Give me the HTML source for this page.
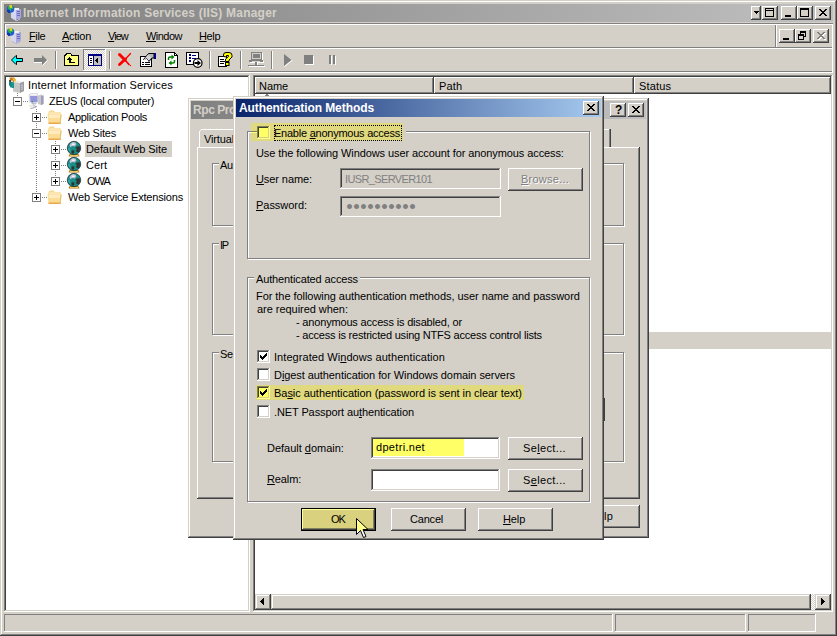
<!DOCTYPE html>
<html lang="en"><head><meta charset="utf-8"><title>Internet Information Services (IIS) Manager</title>
<style>
*{box-sizing:border-box;margin:0;padding:0}
html,body{width:837px;height:636px;overflow:hidden;background:#d4d0c8}
body{position:relative;font-family:"Liberation Sans",sans-serif;font-size:11px;line-height:13px;color:#000;-webkit-font-smoothing:none}
.a{position:absolute}
.t{position:absolute;white-space:nowrap;height:13px;line-height:13px}
.b{font-weight:bold}
u{text-decoration:underline;text-underline-offset:1px;text-decoration-thickness:1px}
.win{background:#d4d0c8;box-shadow:inset -1px -1px 0 #404040,inset 1px 1px 0 #d4d0c8,inset -2px -2px 0 #808080,inset 2px 2px 0 #fff}
.btn{background:#d4d0c8;box-shadow:inset -1px -1px 0 #404040,inset 1px 1px 0 #fff,inset -2px -2px 0 #808080,inset 2px 2px 0 #d4d0c8}
.sunk{box-shadow:inset -1px -1px 0 #fff,inset 1px 1px 0 #808080,inset -2px -2px 0 #d4d0c8,inset 2px 2px 0 #404040}
.sp{box-shadow:inset -1px -1px 0 #fff,inset 1px 1px 0 #808080}
.grp{border:1px solid #808080;box-shadow:1px 1px 0 #fff,inset 1px 1px 0 #fff}
.hdr{background:#d4d0c8;box-shadow:inset -1px -1px 0 #404040,inset 1px 1px 0 #fff,inset -2px -2px 0 #808080}
.capI{background:linear-gradient(90deg,#808080,#c0c0c0)}
.capA{background:linear-gradient(90deg,#0a246a,#a6caf0)}
.sep{position:absolute;width:2px;height:18px;top:51px;border-left:1px solid #808080;border-right:1px solid #fff}
.cb{position:absolute;width:13px;height:13px;background:#fff;box-shadow:inset -1px -1px 0 #fff,inset 1px 1px 0 #808080,inset -2px -2px 0 #d4d0c8,inset 2px 2px 0 #404040}
.cby{background:#ffff66;box-shadow:inset -1px -1px 0 #ffff8c,inset 1px 1px 0 #80805a,inset -2px -2px 0 #d9d17e,inset 2px 2px 0 #40402c}
.dv{position:absolute;width:1px;background-image:linear-gradient(#808080 50%,transparent 50%);background-size:1px 2px}
.dh{position:absolute;height:1px;background-image:linear-gradient(90deg,#808080 50%,transparent 50%);background-size:2px 1px}
.pm{position:absolute;width:9px;height:9px;background:#fff;border:1px solid #808080}
.pm i{position:absolute;left:1px;top:3px;width:5px;height:1px;background:#000}
.pm b{position:absolute;left:3px;top:1px;width:1px;height:5px;background:#000}
svg{position:absolute;overflow:visible}
</style></head>
<body>
<div class="a win" style="left:0;top:0;width:837px;height:636px"></div>
<div class="a capI" style="left:4px;top:4px;width:829px;height:18px"></div>
<svg class="a" style="left:6px;top:5px" width="16" height="16" viewBox="0 0 16 16" shape-rendering="crispEdges" ><path d="M5 4l5-1l5 1v9l-5 2l-5-2z" fill="#d6d6ee"/><path d="M10 5l5-1v9l-5 2z" fill="#a8a8dc"/><path d="M5 4l5-1l5 1l-5 1z" fill="#f0f0fa"/><rect x="11" y="6" width="3" height="1" fill="#6c6cc8"/><rect x="11" y="8" width="3" height="1" fill="#6c6cc8"/><rect x="11" y="10" width="3" height="1" fill="#6c6cc8"/><path d="M6 13l4 2l4-1v1l-4 1l-4-2z" fill="#b8b8d0"/><circle cx="4.500" cy="4" r="3.800" fill="#1c60d0" shape-rendering="auto"/><path d="M2 1h5v3h-2v2h-2v-2h-1z" fill="#28b050" shape-rendering="auto"/><path d="M3 0h3v3h-2z" fill="#e0d020" shape-rendering="auto"/><path d="M1 5h3v3h-2z" fill="#1838b0"/></svg>
<span class="t" style="left:23px;top:7px;letter-spacing:0.214px;font-weight:bold;font-size:12px;color:#d4d0c8">Internet Information Services (IIS) Manager</span>
<div class="a btn" style="left:751px;top:6px;width:10px;height:14px"><svg style="left:3px;top:5px" width="5" height="3" shape-rendering="crispEdges"><path d="M0 0h5v1h-1v1h-1v1h-1v-1h-1v-1h-1z" fill="#000"/></svg></div>
<div class="a btn" style="left:762px;top:6px;width:16px;height:14px"><svg style="left:3px;top:2px" width="9" height="9" shape-rendering="crispEdges"><path d="M0 0h9v9h-9zM1 3v5h7v-5zM1 1v1h7v-1z" fill="#000" fill-rule="evenodd"/></svg></div>
<div class="a btn" style="left:781px;top:6px;width:16px;height:14px"><svg style="left:4px;top:9px" width="6" height="2"><rect width="6" height="2" fill="#000"/></svg></div>
<div class="a btn" style="left:797px;top:6px;width:16px;height:14px"><svg style="left:3px;top:2px" width="9" height="9" shape-rendering="crispEdges"><path d="M0 0h9v9h-9zM1 2v6h7v-6z" fill="#000" fill-rule="evenodd"/></svg></div>
<div class="a btn" style="left:815px;top:6px;width:16px;height:14px"><svg style="left:4px;top:3px" width="8" height="7" viewBox="0 0 8 7" shape-rendering="crispEdges"><path d="M0 0h2v1h1v1h2v-1h1v-1h2v1h-1v1h-1v1h-1v1h1v1h1v1h1v1h-2v-1h-1v-1h-2v1h-1v1h-2v-1h1v-1h1v-1h1v-1h-1v-1h-1v-1h-1z" fill="#000"/></svg></div>
<div class="a" style="left:4px;top:23px;width:829px;height:1px;background:#808080"></div>
<div class="a" style="left:4px;top:24px;width:829px;height:1px;background:#fff"></div>
<div class="a" style="left:4px;top:47px;width:829px;height:1px;background:#808080"></div>
<div class="a" style="left:4px;top:48px;width:829px;height:1px;background:#fff"></div>
<div class="a" style="left:4px;top:71px;width:829px;height:1px;background:#808080"></div>
<div class="a" style="left:4px;top:72px;width:829px;height:1px;background:#fff"></div>
<div class="a" style="left:4px;top:24px;width:1px;height:47px;background:#808080"></div>
<div class="a" style="left:5px;top:25px;width:1px;height:22px;background:#fff"></div>
<div class="a" style="left:5px;top:49px;width:1px;height:22px;background:#fff"></div>
<div class="a" style="left:775px;top:25px;width:1px;height:22px;background:#808080"></div>
<div class="a" style="left:776px;top:25px;width:1px;height:22px;background:#fff"></div>
<div class="a" style="left:832px;top:24px;width:1px;height:49px;background:#fff"></div>
<svg class="a" style="left:6px;top:28px" width="16" height="16" viewBox="0 0 16 16" shape-rendering="crispEdges" ><path d="M5 4l5-1l5 1v9l-5 2l-5-2z" fill="#d6d6ee"/><path d="M10 5l5-1v9l-5 2z" fill="#a8a8dc"/><path d="M5 4l5-1l5 1l-5 1z" fill="#f0f0fa"/><rect x="11" y="6" width="3" height="1" fill="#6c6cc8"/><rect x="11" y="8" width="3" height="1" fill="#6c6cc8"/><rect x="11" y="10" width="3" height="1" fill="#6c6cc8"/><path d="M6 13l4 2l4-1v1l-4 1l-4-2z" fill="#b8b8d0"/><circle cx="4.500" cy="4" r="3.800" fill="#1c60d0" shape-rendering="auto"/><path d="M2 1h5v3h-2v2h-2v-2h-1z" fill="#28b050" shape-rendering="auto"/><path d="M3 0h3v3h-2z" fill="#e0d020" shape-rendering="auto"/><path d="M1 5h3v3h-2z" fill="#1838b0"/></svg>
<span class="t" style="left:29px;top:30px;letter-spacing:-0.388px;"><u>F</u>ile</span>
<span class="t" style="left:62px;top:30px;letter-spacing:-0.266px;"><u>A</u>ction</span>
<span class="t" style="left:108px;top:30px;letter-spacing:-0.964px;"><u>V</u>iew</span>
<span class="t" style="left:146px;top:30px;letter-spacing:-0.537px;"><u>W</u>indow</span>
<span class="t" style="left:199px;top:30px;letter-spacing:-0.360px;"><u>H</u>elp</span>
<div class="a btn" style="left:779px;top:29px;width:16px;height:14px"><svg style="left:4px;top:9px" width="6" height="2"><rect width="6" height="2" fill="#000"/></svg></div>
<div class="a btn" style="left:795px;top:29px;width:16px;height:14px"><svg style="left:3px;top:2px" width="10" height="9" shape-rendering="crispEdges"><path d="M2 0h6v6h-2v-1h1v-3h-4v1h-1zM0 3h6v6h-6zM1 5v3h4v-3z" fill="#000" fill-rule="evenodd"/></svg></div>
<div class="a btn" style="left:813px;top:29px;width:16px;height:14px"><svg style="left:5px;top:4px" width="8" height="7" viewBox="0 0 8 7" shape-rendering="crispEdges"><path d="M0 0h2v1h1v1h2v-1h1v-1h2v1h-1v1h-1v1h-1v1h1v1h1v1h1v1h-2v-1h-1v-1h-2v1h-1v1h-2v-1h1v-1h1v-1h1v-1h-1v-1h-1v-1h-1z" fill="#fff"/></svg><svg style="left:4px;top:3px" width="8" height="7" viewBox="0 0 8 7" shape-rendering="crispEdges"><path d="M0 0h2v1h1v1h2v-1h1v-1h2v1h-1v1h-1v1h-1v1h1v1h1v1h1v1h-2v-1h-1v-1h-2v1h-1v1h-2v-1h1v-1h1v-1h1v-1h-1v-1h-1v-1h-1z" fill="#808080"/></svg></div>
<svg class="a" style="left:9px;top:52px" width="16" height="16" viewBox="0 0 16 16" shape-rendering="crispEdges" ><path d="M2.500 8L7 3.500H7.500V6.500H13.500V9.500H7.500V12.500H7Z" fill="#00ffff" stroke="#000" stroke-width="1" stroke-linejoin="miter" shape-rendering="auto"/></svg>
<svg class="a" style="left:32px;top:52px" width="16" height="16" viewBox="0 0 16 16" shape-rendering="crispEdges" ><path d="M15 8L10 3V6H2V10H10V13Z" fill="#808080" shape-rendering="auto"/><path d="M10.500 13.500L15.500 8.500M2 10.500H10" stroke="#fff" stroke-width="1" fill="none" shape-rendering="auto"/></svg>
<div class="sep" style="left:55px"></div>
<svg class="a" style="left:63px;top:52px" width="16" height="16" viewBox="0 0 16 16" shape-rendering="crispEdges" ><path d="M1.500 3.500H2.500V2.500H3.500V1.500H7.500V2.500H8.500V3.500H15.500V13.500H1.500Z" fill="#ffff80" stroke="#000" stroke-width="1"/><rect x="4" y="2" width="4" height="2" fill="#ffff80"/><rect x="6" y="5" width="1" height="1"/><rect x="5" y="6" width="3" height="1"/><rect x="4" y="7" width="5" height="1"/><rect x="6" y="8" width="2" height="2"/><rect x="6" y="10" width="6" height="1"/></svg>
<div class="a sp" style="left:83px;top:49px;width:23px;height:22px;background-color:#fff;background-image:conic-gradient(#d4d0c8 25%,#fff 0 50%,#d4d0c8 0 75%,#fff 0);background-size:2px 2px"></div>
<svg class="a" style="left:87px;top:52px" width="16" height="16" viewBox="0 0 16 16" shape-rendering="crispEdges" ><rect x="1" y="2" width="14" height="12" fill="#000080"/><rect x="2" y="4" width="4" height="9" fill="#fff"/><rect x="7" y="4" width="7" height="9" fill="#c0c0c0"/><rect x="3" y="6" width="2" height="1"/><rect x="3" y="8" width="2" height="1"/><rect x="3" y="10" width="2" height="1"/><rect x="8" y="8" width="1" height="1"/><rect x="9" y="7" width="1" height="3"/><rect x="10" y="6" width="1" height="5"/></svg>
<div class="sep" style="left:109px"></div>
<svg class="a" style="left:117px;top:52px" width="16" height="16" viewBox="0 0 16 16" shape-rendering="crispEdges" ><g shape-rendering="auto" fill="none" stroke="#ff0000" stroke-linecap="round"><path d="M2.500 2.500L8 8" stroke-width="3"/><path d="M8 8L12 12.500" stroke-width="1.800"/><path d="M13.500 1.500L8.500 7" stroke-width="1.300"/><path d="M8.500 7L2.500 12.500" stroke-width="2.800"/></g><rect x="13" y="13" width="1" height="1" fill="#ff0000"/></svg>
<svg class="a" style="left:140px;top:52px" width="16" height="16" viewBox="0 0 16 16" shape-rendering="crispEdges" ><rect x="0.500" y="4.500" width="11" height="10" fill="#fff" stroke="#000"/><rect x="2" y="10" width="2" height="1"/><rect x="5" y="10" width="5" height="1"/><rect x="2" y="12" width="2" height="1"/><rect x="5" y="12" width="5" height="1"/><g shape-rendering="auto"><path d="M3.500 7.500L8.500 1.500H14V6H12L9 9.500L6.500 6.500Z" fill="#b8b8b8" stroke="#000" stroke-width="1"/><path d="M4 8l4.500-5M5.500 8.500l4-4.500M7 9l3.500-4" stroke="#fff" stroke-width=".8"/></g><rect x="14" y="1" width="2" height="6" fill="#000080"/></svg>
<svg class="a" style="left:164px;top:52px" width="16" height="16" viewBox="0 0 16 16" shape-rendering="crispEdges" ><path d="M1.500 0.500H10.500L13.500 3.500V15.500H1.500Z" fill="#fff" stroke="#000"/><path d="M10.500 0.500V3.500H13.500" fill="none" stroke="#000"/><g shape-rendering="auto"><path d="M4.500 8V6.500A1.500 1.500 0 0 1 6 5H8.500M10.500 8V9.500A1.500 1.500 0 0 1 9 11H6.500" fill="none" stroke="#008000" stroke-width="1.500"/><path d="M7.500 2.500L10.500 5L7.500 7.500Z" fill="#008000"/><path d="M7.500 8.500L4.500 11L7.500 13.500Z" fill="#008000"/></g></svg>
<svg class="a" style="left:186px;top:52px" width="16" height="16" viewBox="0 0 16 16" shape-rendering="crispEdges" ><rect x="0.500" y="0.500" width="12" height="12" fill="#fff" stroke="#000"/><rect x="3" y="2" width="2" height="2" fill="#000080"/><rect x="6" y="3" width="4" height="1" fill="#000080"/><rect x="3" y="5" width="2" height="2" fill="#000080"/><rect x="6" y="6" width="4" height="1" fill="#000080"/><rect x="3" y="8" width="2" height="2" fill="#000080"/><g shape-rendering="auto"><circle cx="11.700" cy="11" r="4.300" fill="#fff" stroke="#000" stroke-width="1.200"/><path d="M8.500 10H11.500V8L15 11L11.500 14V12H8.500Z" fill="#000"/></g></svg>
<div class="sep" style="left:209px"></div>
<svg class="a" style="left:217px;top:52px" width="16" height="16" viewBox="0 0 16 16" shape-rendering="crispEdges" ><rect x="1.500" y="4.500" width="8" height="10" fill="#fff" stroke="#000"/><rect x="3" y="7" width="4" height="1"/><rect x="3" y="9" width="5" height="1"/><rect x="3" y="11" width="4" height="1"/><g shape-rendering="auto"><path d="M6.500 4.500V3A2.500 2.500 0 0 1 9 .5H12A3 3 0 0 1 15 3.500V5L12 8V9.500H8.500V7L11.500 4.500V3.500H9.500V5Z" fill="#ffff00" stroke="#000" stroke-width="1"/><rect x="8.500" y="10.500" width="3.500" height="3" fill="#ffff00" stroke="#000"/></g></svg>
<div class="sep" style="left:240px"></div>
<svg class="a" style="left:248px;top:52px" width="16" height="16" viewBox="0 0 16 16" shape-rendering="crispEdges" ><rect x="4" y="1" width="11" height="8" fill="#fff"/><rect x="3" y="0" width="11" height="8" fill="#808080"/><rect x="4" y="1" width="9" height="6" fill="#d4d0c8"/><rect x="5" y="2" width="7" height="4" fill="#808080"/><rect x="2" y="9" width="14" height="2" fill="#fff"/><rect x="1" y="8" width="14" height="2" fill="#808080"/><rect x="4" y="9" width="8" height="1" fill="#d4d0c8"/><rect x="7" y="10" width="2" height="3" fill="#808080"/><rect x="9" y="11" width="1" height="2" fill="#fff"/><rect x="0" y="13" width="16" height="1" fill="#808080"/><rect x="1" y="14" width="16" height="1" fill="#fff"/></svg>
<div class="sep" style="left:271px"></div>
<svg class="a" style="left:279px;top:52px" width="16" height="16" viewBox="0 0 16 16" shape-rendering="crispEdges" ><path d="M5 2L12.500 8L5 14Z" fill="#808080" shape-rendering="auto"/><path d="M5.500 14.500L13.300 8.300" stroke="#fff" stroke-width="1" shape-rendering="auto"/></svg>
<svg class="a" style="left:302px;top:52px" width="16" height="16" viewBox="0 0 16 16" shape-rendering="crispEdges" ><rect x="3" y="4" width="9" height="9" fill="#fff"/><rect x="2" y="3" width="9" height="9" fill="#808080"/></svg>
<svg class="a" style="left:325px;top:52px" width="16" height="16" viewBox="0 0 16 16" shape-rendering="crispEdges" ><rect x="4" y="3" width="2" height="9" fill="#808080"/><rect x="6" y="4" width="1" height="9" fill="#fff"/><rect x="8" y="3" width="2" height="9" fill="#808080"/><rect x="10" y="4" width="1" height="9" fill="#fff"/></svg>
<div class="a sunk" style="left:4px;top:75px;width:246px;height:537px;background:#fff"></div>
<div class="dv" style="left:17px;top:93px;height:4px"></div>
<div class="dh" style="left:23px;top:101px;width:6px"></div>
<div class="dv" style="left:36px;top:109px;height:88px"></div>
<div class="dh" style="left:42px;top:117px;width:6px"></div>
<div class="dh" style="left:42px;top:133px;width:6px"></div>
<div class="dh" style="left:42px;top:197px;width:6px"></div>
<div class="dv" style="left:55px;top:141px;height:40px"></div>
<div class="dh" style="left:61px;top:149px;width:6px"></div>
<div class="dh" style="left:61px;top:165px;width:6px"></div>
<div class="dh" style="left:61px;top:181px;width:6px"></div>
<div class="pm" style="left:13px;top:97px"><i></i></div>
<div class="pm" style="left:32px;top:113px"><i></i><b></b></div>
<div class="pm" style="left:32px;top:129px"><i></i></div>
<div class="pm" style="left:51px;top:145px"><i></i><b></b></div>
<div class="pm" style="left:51px;top:161px"><i></i><b></b></div>
<div class="pm" style="left:51px;top:177px"><i></i><b></b></div>
<div class="pm" style="left:32px;top:193px"><i></i><b></b></div>
<svg class="a" style="left:8px;top:77px" width="16" height="16" viewBox="0 0 16 16" shape-rendering="crispEdges" ><g shape-rendering="auto"><path d="M5 5L9 3.500L16 4.500L12 6Z" fill="#f0f0f0"/><path d="M5 5L12 6V16L5 14.500Z" fill="#c6c6c6"/><path d="M12 6L16 4.500V14L12 16Z" fill="#9c9c9c"/><path d="M13 8.500l2-.7M13 10.500l2-.7M13 12.500l2-.7" stroke="#c8c8f0" stroke-width="1"/><path d="M1 3H5.500V10.500H2.500L1 8Z" fill="#108880"/><path d="M3 6h3v5h-2z" fill="#18988c"/><path d="M1.500 .5H6L8 3L5 5.500L2 4.500Z" fill="#c87c24"/><path d="M4 1L7 2L8.500 4.500L6 4Z" fill="#f8c820"/><rect x="2.500" y="3.500" width="2.500" height="1.500" fill="#d8d8f8"/><rect x="1.500" y="3" width="1.500" height="2" fill="#604020"/></g></svg>
<svg class="a" style="left:28px;top:93px" width="16" height="16" viewBox="0 0 16 16" shape-rendering="crispEdges" ><g shape-rendering="auto"><path d="M.5 1.500L3 0H10V9.500H1Z" fill="#dcdce4"/><path d="M2 3H9.500V9H2.500Z" fill="#9494d8"/><path d="M2.500 1h6.500v1.500h-6.500z" fill="#f4f4f0"/><path d="M10 2.500L13 1.500L15.500 2.500V11L13 12L10 11Z" fill="#c8c8d0"/><path d="M13 3L15.500 2.500V11L13 12Z" fill="#a0a0ac"/><path d="M13.700 4.500l1.300-.3M13.700 6.500l1.300-.3M13.700 8.500l1.300-.3" stroke="#9c9ce0" stroke-width="1"/><rect x="3.500" y="8" width="1.500" height="1.500" fill="#109090"/><path d="M3.500 9.500H8.500V11H3.500Z" fill="#b4b4c8"/><path d="M.5 12L7.500 10.500L9 13L2.500 15.500Z" fill="#ecece0"/><path d="M2.500 15.500L9 13V14L2.500 16.300Z" fill="#9c9cb8"/><path d="M5 11.500l3 2.500" stroke="#a8a8e0" stroke-width="1"/></g></svg>
<svg class="a" style="left:47px;top:109px" width="16" height="16" viewBox="0 0 16 16" shape-rendering="crispEdges" ><g shape-rendering="auto"><path d="M1.500 3L3 1.500H6.500L8 3H13.500V7H1.500Z" fill="#f6d690"/><path d="M2.500 3.500H13V6H2.500Z" fill="#fff4d0"/><path d="M0.500 5.500L1.500 4.500H13.500L14.500 5.500L13.500 14.500H1.500Z" fill="#fcdc94"/><path d="M1.500 5.500H13.500L13.200 9H1.800Z" fill="#feecc0"/><path d="M1.300 13.500H13.700L13.500 15H1.500Z" fill="#e8a848"/><path d="M13.500 6L14.500 5.500L13.600 14.500L13 14Z" fill="#eab45c"/></g></svg>
<svg class="a" style="left:47px;top:125px" width="16" height="16" viewBox="0 0 16 16" shape-rendering="crispEdges" ><g shape-rendering="auto"><path d="M1.500 3L3 1.500H6.500L8 3H13.500V7H1.500Z" fill="#f6d690"/><path d="M2.500 3.500H13V6H2.500Z" fill="#fff4d0"/><path d="M0.500 5.500L1.500 4.500H13.500L14.500 5.500L13.500 14.500H1.500Z" fill="#fcdc94"/><path d="M1.500 5.500H13.500L13.200 9H1.800Z" fill="#feecc0"/><path d="M1.300 13.500H13.700L13.500 15H1.500Z" fill="#e8a848"/><path d="M13.500 6L14.500 5.500L13.600 14.500L13 14Z" fill="#eab45c"/></g></svg>
<svg class="a" style="left:47px;top:189px" width="16" height="16" viewBox="0 0 16 16" shape-rendering="crispEdges" ><g shape-rendering="auto"><path d="M1.500 3L3 1.500H6.500L8 3H13.500V7H1.500Z" fill="#f6d690"/><path d="M2.500 3.500H13V6H2.500Z" fill="#fff4d0"/><path d="M0.500 5.500L1.500 4.500H13.500L14.500 5.500L13.500 14.500H1.500Z" fill="#fcdc94"/><path d="M1.500 5.500H13.500L13.200 9H1.800Z" fill="#feecc0"/><path d="M1.300 13.500H13.700L13.500 15H1.500Z" fill="#e8a848"/><path d="M13.500 6L14.500 5.500L13.600 14.500L13 14Z" fill="#eab45c"/></g></svg>
<svg class="a" style="left:66px;top:141px" width="16" height="16" viewBox="0 0 16 16" shape-rendering="crispEdges" ><g shape-rendering="auto"><path d="M3.500 13L2.500 15.500H13.500L12.500 13Z" fill="#b87c28"/><path d="M4 14.500H12" stroke="#f4cc58" stroke-width="1"/><circle cx="8" cy="7" r="6.700" fill="#188c88"/><circle cx="8" cy="7" r="6.700" fill="none" stroke="#243434" stroke-width=".8"/><path d="M4.500 2.500L7 1L9.500 1.500L10.500 3.500L8.500 5.500L6 5L4.500 6.500L3.500 4.500Z" fill="#c4c4d4"/><path d="M6 2.500h2.500v1.500h-2.500z" fill="#eeeef6"/><path d="M9.500 6L13.500 5L14.300 8L12.500 11.500L10 10.500L10.500 8Z" fill="#2c3434"/><path d="M5.500 9.500L8 9L8.500 11.500L7 13L5.500 12Z" fill="#2c3434"/><path d="M2 6.500L4 7.500L4.500 10.500L3 10Z" fill="#30b0a8"/></g></svg>
<svg class="a" style="left:66px;top:157px" width="16" height="16" viewBox="0 0 16 16" shape-rendering="crispEdges" ><g shape-rendering="auto"><path d="M3.500 13L2.500 15.500H13.500L12.500 13Z" fill="#b87c28"/><path d="M4 14.500H12" stroke="#f4cc58" stroke-width="1"/><circle cx="8" cy="7" r="6.700" fill="#188c88"/><circle cx="8" cy="7" r="6.700" fill="none" stroke="#243434" stroke-width=".8"/><path d="M4.500 2.500L7 1L9.500 1.500L10.500 3.500L8.500 5.500L6 5L4.500 6.500L3.500 4.500Z" fill="#c4c4d4"/><path d="M6 2.500h2.500v1.500h-2.500z" fill="#eeeef6"/><path d="M9.500 6L13.500 5L14.300 8L12.500 11.500L10 10.500L10.500 8Z" fill="#2c3434"/><path d="M5.500 9.500L8 9L8.500 11.500L7 13L5.500 12Z" fill="#2c3434"/><path d="M2 6.500L4 7.500L4.500 10.500L3 10Z" fill="#30b0a8"/></g></svg>
<svg class="a" style="left:66px;top:173px" width="16" height="16" viewBox="0 0 16 16" shape-rendering="crispEdges" ><g shape-rendering="auto"><path d="M3.500 13L2.500 15.500H13.500L12.500 13Z" fill="#b87c28"/><path d="M4 14.500H12" stroke="#f4cc58" stroke-width="1"/><circle cx="8" cy="7" r="6.700" fill="#188c88"/><circle cx="8" cy="7" r="6.700" fill="none" stroke="#243434" stroke-width=".8"/><path d="M4.500 2.500L7 1L9.500 1.500L10.500 3.500L8.500 5.500L6 5L4.500 6.500L3.500 4.500Z" fill="#c4c4d4"/><path d="M6 2.500h2.500v1.500h-2.500z" fill="#eeeef6"/><path d="M9.500 6L13.500 5L14.300 8L12.500 11.500L10 10.500L10.500 8Z" fill="#2c3434"/><path d="M5.500 9.500L8 9L8.500 11.500L7 13L5.500 12Z" fill="#2c3434"/><path d="M2 6.500L4 7.500L4.500 10.500L3 10Z" fill="#30b0a8"/></g></svg>
<div class="a" style="left:85px;top:141px;width:87px;height:16px;background:#d4d0c8"></div>
<span class="t" style="left:28px;top:79px;letter-spacing:0.146px;">Internet Information Services</span>
<span class="t" style="left:49px;top:95px;letter-spacing:-0.298px;">ZEUS (local computer)</span>
<span class="t" style="left:68px;top:111px;letter-spacing:-0.317px;">Application Pools</span>
<span class="t" style="left:68px;top:127px;letter-spacing:-0.215px;">Web Sites</span>
<span class="t" style="left:86px;top:143px;letter-spacing:-0.086px;">Default Web Site</span>
<span class="t" style="left:86px;top:159px;letter-spacing:0.105px;">Cert</span>
<span class="t" style="left:87px;top:175px;letter-spacing:-1.075px;">OWA</span>
<span class="t" style="left:68px;top:191px;letter-spacing:-0.183px;">Web Service Extensions</span>
<div class="a sunk" style="left:253px;top:75px;width:580px;height:537px;background:#fff"></div>
<div class="a hdr" style="left:255px;top:77px;width:179px;height:17px"></div>
<div class="a hdr" style="left:434px;top:77px;width:200px;height:17px"></div>
<div class="a hdr" style="left:634px;top:77px;width:197px;height:17px"></div>
<span class="t" style="left:259px;top:80px;letter-spacing:-0.036px;">Name</span>
<span class="t" style="left:439px;top:80px;letter-spacing:0.140px;">Path</span>
<span class="t" style="left:639px;top:80px;letter-spacing:0.149px;">Status</span>
<div class="a" style="left:266px;top:94px;width:2px;height:1px;background:#808080"></div><div class="a" style="left:265px;top:95px;width:4px;height:1px;background:#808080"></div>
<div class="a" style="left:255px;top:332px;width:576px;height:17px;background:#d4d0c8"></div>
<div class="a" style="left:255px;top:594px;width:576px;height:16px;background-color:#fff;background-image:conic-gradient(#d4d0c8 25%,#fff 0 50%,#d4d0c8 0 75%,#fff 0);background-size:2px 2px"></div>
<div class="a win" style="left:255px;top:594px;width:16px;height:16px"><svg style="left:5px;top:4px" width="4" height="7" shape-rendering="crispEdges"><path d="M3 0h1v7h-1v-1h-1v-1h-1v-1h-1v-1h1v-1h1v-1h1z" fill="#000"/></svg></div>
<div class="a win" style="left:271px;top:594px;width:540px;height:16px"></div>
<div class="a win" style="left:815px;top:594px;width:16px;height:16px"><svg style="left:6px;top:4px" width="4" height="7" shape-rendering="crispEdges"><path d="M0 0h1v1h1v1h1v1h1v1h-1v1h-1v1h-1v1h-1z" fill="#000"/></svg></div>
<div class="a sp" style="left:4px;top:614px;width:609px;height:18px"></div>
<div class="a sp" style="left:615px;top:614px;width:131px;height:18px"></div>
<div class="a sp" style="left:748px;top:614px;width:68px;height:18px"></div>
<div class="a win" style="left:188px;top:98px;width:461px;height:440px"></div>
<div class="a capI" style="left:191px;top:101px;width:455px;height:18px"></div>
<span class="t" style="left:193px;top:104px;letter-spacing:-0.431px;font-weight:bold;font-size:12px;color:#d4d0c8">Rpc Pro</span>
<div class="a btn" style="left:610px;top:103px;width:16px;height:14px"></div>
<span class="t" style="left:615px;top:104px;letter-spacing:-1.344px;font-weight:bold;font-size:12px">?</span>
<div class="a btn" style="left:628px;top:103px;width:16px;height:14px"><svg style="left:4px;top:3px" width="8" height="7" viewBox="0 0 8 7" shape-rendering="crispEdges"><path d="M0 0h2v1h1v1h2v-1h1v-1h2v1h-1v1h-1v1h-1v1h1v1h1v1h1v1h-2v-1h-1v-1h-2v1h-1v1h-2v-1h1v-1h1v-1h1v-1h-1v-1h-1v-1h-1z" fill="#000"/></svg></div>
<div class="a btn" style="left:197px;top:147px;width:443px;height:352px"></div>
<div class="a" style="left:199px;top:131px;width:1px;height:16px;background:#fff"></div>
<div class="a" style="left:200px;top:130px;width:1px;height:1px;background:#fff"></div>
<div class="a" style="left:201px;top:129px;width:40px;height:1px;background:#fff"></div>
<span class="t" style="left:204px;top:133px;letter-spacing:-0.141px;">Virtual</span>
<div class="a" style="left:604px;top:129px;width:7px;height:18px;background:#d4d0c8;box-shadow:inset -1px 0 0 #404040,inset -2px 0 0 #808080,inset 0 1px 0 #fff"></div>
<div class="a grp" style="left:212px;top:163px;width:412px;height:63px"></div>
<div class="a grp" style="left:212px;top:243px;width:412px;height:92px"></div>
<div class="a grp" style="left:212px;top:352px;width:412px;height:110px"></div>
<div class="a" style="left:219px;top:158px;width:20px;height:13px;background:#d4d0c8"></div>
<div class="a" style="left:219px;top:237px;width:16px;height:13px;background:#d4d0c8"></div>
<div class="a" style="left:219px;top:346px;width:20px;height:13px;background:#d4d0c8"></div>
<span class="t" style="left:220px;top:159px;letter-spacing:-0.234px;">Au</span>
<span class="t" style="left:220px;top:239px;letter-spacing:-1.203px;">IP</span>
<span class="t" style="left:220px;top:348px;letter-spacing:-0.234px;">Se</span>
<div class="a" style="left:604px;top:398px;width:1px;height:23px;background:#404040"></div>
<div class="a btn" style="left:565px;top:505px;width:75px;height:23px"></div>
<span class="t" style="left:604px;top:510px;letter-spacing:0.219px;">lp</span>
<div class="a win" style="left:233px;top:96px;width:371px;height:444px"></div>
<div class="a capA" style="left:236px;top:99px;width:365px;height:18px"></div>
<span class="t" style="left:239px;top:102px;letter-spacing:-0.076px;font-weight:bold;font-size:12px;color:#fff">Authentication Methods</span>
<div class="a btn" style="left:583px;top:101px;width:16px;height:14px"><svg style="left:4px;top:3px" width="8" height="7" viewBox="0 0 8 7" shape-rendering="crispEdges"><path d="M0 0h2v1h1v1h2v-1h1v-1h2v1h-1v1h-1v1h-1v1h1v1h1v1h1v1h-2v-1h-1v-1h-2v1h-1v1h-2v-1h1v-1h1v-1h1v-1h-1v-1h-1v-1h-1z" fill="#000"/></svg></div>
<div class="a grp" style="left:247px;top:131px;width:343px;height:128px"></div>
<div class="a" style="left:251px;top:123px;width:155px;height:18px;background:#d4d0c8"></div>
<div class="a" style="left:251px;top:123px;width:152px;height:18px;background:#e0d97e"></div>
<div class="a" style="left:251px;top:131px;width:6px;height:1px;background:#80805a"></div><div class="a" style="left:251px;top:132px;width:6px;height:1px;background:#ffff8c"></div>
<div class="cb cby" style="left:257px;top:126px"></div>
<div class="a" style="left:274px;top:125px;width:128px;height:16px;border:1px dotted #000"></div>
<span class="t" style="left:274px;top:127px;letter-spacing:-0.241px;">Enable <u>a</u>nonymous access</span>
<span class="t" style="left:256px;top:147px;letter-spacing:-0.097px;">Use the following Windows user account for anonymous access:</span>
<span class="t" style="left:256px;top:173px;letter-spacing:-0.087px;"><u>U</u>ser name:</span>
<div class="a sunk" style="left:340px;top:168px;width:161px;height:21px;background:#d4d0c8"></div>
<span class="t" style="left:345px;top:173px;letter-spacing:-0.631px;color:#808080">IUSR_SERVER101</span>
<div class="a btn" style="left:508px;top:168px;width:75px;height:23px"></div>
<span class="t" style="left:522px;top:174px;letter-spacing:0.241px;color:#fff"><u>B</u>rowse...</span>
<span class="t" style="left:521px;top:173px;letter-spacing:0.241px;color:#808080"><u>B</u>rowse...</span>
<span class="t" style="left:256px;top:199px;letter-spacing:-0.039px;"><u>P</u>assword:</span>
<div class="a sunk" style="left:340px;top:196px;width:161px;height:21px;background:#d4d0c8"></div>
<span class="t" style="left:346.3px;top:199.7px;font-size:18.45px;letter-spacing:.54px;color:#808080">&#8226;&#8226;&#8226;&#8226;&#8226;&#8226;&#8226;&#8226;&#8226;&#8226;</span>
<div class="a grp" style="left:247px;top:277px;width:343px;height:225px"></div>
<div class="a" style="left:254px;top:271px;width:106px;height:13px;background:#d4d0c8"></div>
<span class="t" style="left:256px;top:273px;letter-spacing:-0.129px;">Authenticated access</span>
<span class="t" style="left:256px;top:290px;letter-spacing:-0.052px;">For the following authentication methods, user name and password</span>
<span class="t" style="left:257px;top:303px;letter-spacing:-0.043px;">are required when:</span>
<span class="t" style="left:296px;top:316px;letter-spacing:-0.173px;">- anonymous access is disabled, or</span>
<span class="t" style="left:296px;top:329px;letter-spacing:-0.201px;">- access is restricted using NTFS access control lists</span>
<div class="cb" style="left:257px;top:350px"><svg style="left:3px;top:3px" width="7" height="7" shape-rendering="crispEdges"><path d="M0 2h1v1h1v1h1v-1h1v-1h1v-1h1v-1h1v3h-1v1h-1v1h-1v1h-1v1h-1v-1h-1v-1h-1z" fill="#000"/></svg></div>
<span class="t" style="left:274px;top:351px;letter-spacing:0.063px;">Integrated Wi<u>n</u>dows authentication</span>
<div class="cb" style="left:257px;top:368px"></div>
<span class="t" style="left:274px;top:369px;letter-spacing:-0.076px;">D<u>i</u>gest authentication for Windows domain servers</span>
<div class="a" style="left:256px;top:385px;width:268px;height:15px;background:#e0d97e"></div>
<div class="cb cby" style="left:257px;top:386px"><svg style="left:3px;top:3px" width="7" height="7" shape-rendering="crispEdges"><path d="M0 2h1v1h1v1h1v-1h1v-1h1v-1h1v-1h1v3h-1v1h-1v1h-1v1h-1v1h-1v-1h-1v-1h-1z" fill="#000"/></svg></div>
<span class="t" style="left:274px;top:387px;letter-spacing:-0.042px;">Ba<u>s</u>ic authentication (password is sent in clear text)</span>
<div class="cb" style="left:257px;top:405px"></div>
<span class="t" style="left:274px;top:406px;letter-spacing:-0.106px;">.NET Passport au<u>t</u>hentication</span>
<span class="t" style="left:267px;top:442px;letter-spacing:-0.010px;">Default <u>d</u>omain:</span>
<div class="a sunk" style="left:371px;top:437px;width:129px;height:22px;background:#fff"></div>
<div class="a" style="left:373px;top:439px;width:91px;height:17px;background:#ffff66"></div>
<span class="t" style="left:376px;top:441px;letter-spacing:0.312px;">dpetri.net</span>
<div class="a btn" style="left:508px;top:437px;width:75px;height:23px"></div>
<span class="t" style="left:523px;top:442px;letter-spacing:0.362px;">Se<u>l</u>ect...</span>
<span class="t" style="left:267px;top:473px;letter-spacing:-0.117px;"><u>R</u>ealm:</span>
<div class="a sunk" style="left:371px;top:469px;width:129px;height:22px;background:#fff"></div>
<div class="a btn" style="left:508px;top:469px;width:75px;height:23px"></div>
<span class="t" style="left:523px;top:474px;letter-spacing:0.362px;">S<u>e</u>lect...</span>
<div class="a" style="left:301px;top:508px;width:75px;height:23px;background:#000"></div>
<div class="a" style="left:302px;top:509px;width:73px;height:21px;background:#d9d17e;box-shadow:inset -1px -1px 0 #404040,inset 1px 1px 0 #ffff99,inset -2px -2px 0 #808060,inset 2px 2px 0 #d9d17e"></div>
<span class="t" style="left:331px;top:513px;letter-spacing:-0.953px;">OK</span>
<div class="a btn" style="left:391px;top:508px;width:75px;height:23px"></div>
<span class="t" style="left:410px;top:513px;letter-spacing:-0.195px;">Cancel</span>
<div class="a btn" style="left:478px;top:508px;width:75px;height:23px"></div>
<span class="t" style="left:503px;top:513px;letter-spacing:-0.110px;"><u>H</u>elp</span>
<svg class="a" style="left:356px;top:518px" width="13" height="21" viewBox="0 0 13 21"><defs><linearGradient id="cg" gradientUnits="userSpaceOnUse" x1="0" y1="0" x2="0" y2="21"><stop offset="0.6" stop-color="#ffff8c"/><stop offset="0.6" stop-color="#fff"/></linearGradient></defs><path d="M0.500 0.500V16.500L4.500 12.500L7.500 19.500L10 18.500L7 11.500H12Z" fill="url(#cg)" stroke="#000" stroke-width="1"/></svg>
</body></html>
